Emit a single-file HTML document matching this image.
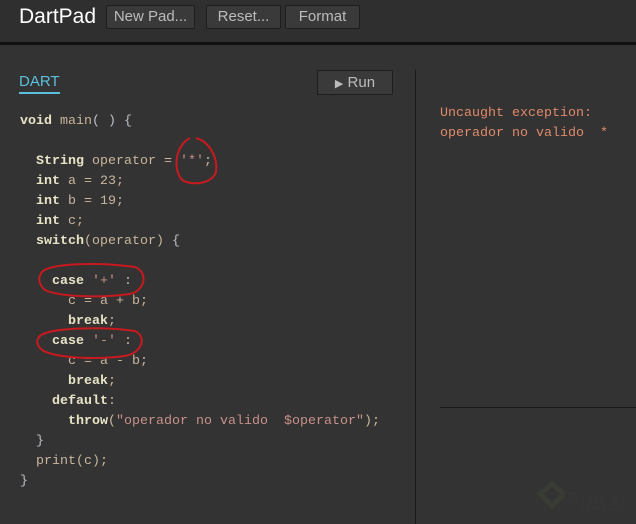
<!DOCTYPE html>
<html><head><meta charset="utf-8"><style>
body{margin:0;width:636px;height:524px;background:#333;overflow:hidden;position:relative;font-family:"Liberation Sans",sans-serif}
.hdr{position:absolute;left:0;top:0;width:636px;height:42px;background:#2f2f2f;border-bottom:3px solid #111}
.logo{position:absolute;left:19px;top:5px;color:#fff;font-size:21px}
.btn{position:absolute;top:5px;height:22px;border:1px solid #1e1e1e;background:#3a3a3a;color:#bbb;font-size:15px;line-height:22px;text-align:center;border-radius:2px}
.tab{position:absolute;left:19px;top:73px;color:#5bc0de;font-size:15px;border-bottom:2px solid #5bc0de;padding-bottom:2px}
.run{position:absolute;left:317px;top:70px;width:74px;height:23px;border:1px solid #1e1e1e;background:#3a3a3a;color:#bbb;font-size:15px;line-height:23px;text-align:center;border-radius:2px}
.vl{position:absolute;left:415px;top:70px;width:1px;height:454px;background:#1a1a1a}
.hl{position:absolute;left:440px;top:407px;width:196px;height:1px;background:#1a1a1a}
pre{margin:0;position:absolute;left:20px;top:112px;font-family:"Liberation Mono",monospace;font-size:13.33px;line-height:20px;color:#c9b59c}
.k{color:#e8e3c6;font-weight:bold}.s{color:#c8908a}.p{color:#b8c0c8}
.out{position:absolute;left:440px;top:104px;font-family:"Liberation Mono",monospace;font-size:13.33px;line-height:20px;color:#e08a6a;white-space:pre}
svg{position:absolute;left:0;top:0}
</style></head><body>
<div class="hdr"></div>
<div class="logo">DartPad</div>
<div class="btn" style="left:106px;width:87px">New Pad...</div>
<div class="btn" style="left:206px;width:73px">Reset...</div>
<div class="btn" style="left:285px;width:73px">Format</div>
<div class="tab">DART</div>
<div class="run"><span style="font-size:11px">▶</span> Run</div>
<div class="vl"></div><div class="hl"></div>
<pre><span class="k">void</span> main<span class="p">( ) {</span>

  <span class="k">String</span> operator = <span class="s">'*'</span>;
  <span class="k">int</span> a = 23;
  <span class="k">int</span> b = 19;
  <span class="k">int</span> c;
  <span class="k">switch</span>(operator) <span class="p">{</span>

    <span class="k">case</span> <span class="s">'+'</span> :
      c = a + b;
      <span class="k">break</span>;
    <span class="k">case</span> <span class="s">'-'</span> :
      c = a - b;
      <span class="k">break</span>;
    <span class="k">default</span>:
      <span class="k">throw</span>(<span class="s">"operador no valido  $operator"</span>);
  <span class="p">}</span>
  print(c);
<span class="p">}</span></pre>
<div class="out">Uncaught exception:
operador no valido  *</div>
<svg width="636" height="524">
<g fill="none" stroke="#c8191e" stroke-width="2">
<path d="M190 138 C176 145,172 168,182 180 C192 186,212 184,216 172 C218 158,210 142,196 138"/>
<path d="M42 272 C50 263,100 262,135 267 C148 272,146 290,130 294 C100 298,60 297,45 290 C38 284,38 277,42 272"/>
<path d="M40 336 C48 328,100 326,135 331 C146 336,144 352,125 356 C95 360,55 358,42 350 C36 345,36 340,40 336"/>
</g>
<g opacity="0.25"><path d="M540 494 l12 -10 l12 10 l-12 12 z" fill="none" stroke="#4a5a3a" stroke-width="5"/><text x="562" y="510" font-family="Liberation Sans" font-size="26" fill="#3c3c3c">Platzi</text></g>
</svg>
</body></html>
